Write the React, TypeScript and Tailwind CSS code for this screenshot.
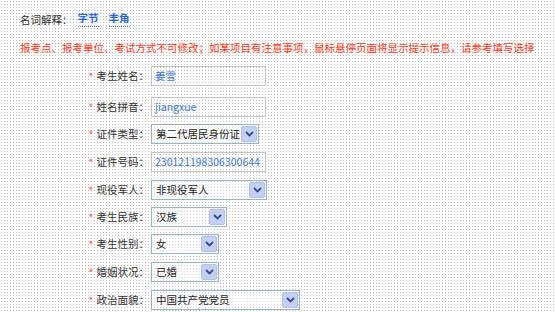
import React from 'react'

const font = { fontFamily: '"Noto Sans CJK SC", "Noto Sans", sans-serif' }

function Arrow() {
  return (
    <span className="flex h-[16px] w-[16px] items-center justify-center rounded-[2px] bg-[#c3cff5] border border-[#b3c0ee]">
      <svg width="9" height="6" viewBox="0 0 9 6">
        <path d="M1 1 L4.5 4.5 L8 1" stroke="#3a4a86" strokeWidth="1.8" fill="none" />
      </svg>
    </span>
  )
}

function Label({ text }: { text: string }) {
  return (
    <div className="flex items-center justify-end pr-[2px] text-[#333]">
      <span className="mr-[3px] text-[11px] leading-none text-[#ff5a5a]">*</span>
      <span>{text}：</span>
    </div>
  )
}

function TextBox({ value, w }: { value: string; w: string }) {
  return (
    <div className={`flex h-[20px] items-center border border-[#c4c4c4] px-[3px] text-[#3c78d8] ${w}`}>
      {value}
    </div>
  )
}

function Select({ value, w }: { value: string; w: string }) {
  return (
    <div className={`flex h-[20px] items-center justify-between border border-[#93b8c4] bg-white/40 pl-[4px] pr-[1px] text-[#222] ${w}`}>
      <span>{value}</span>
      <Arrow />
    </div>
  )
}

const rows: { label: string; kind: 'text' | 'select'; value: string; w: string; gap: string }[] = [
  { label: '考生姓名', kind: 'text', value: '姜雪', w: 'w-[115px]', gap: 'mt-0' },
  { label: '姓名拼音', kind: 'text', value: 'jiangxue', w: 'w-[115px]', gap: 'mt-[11px]' },
  { label: '证件类型', kind: 'select', value: '第二代居民身份证', w: 'w-[108px]', gap: 'mt-[7px]' },
  { label: '证件号码', kind: 'text', value: '230121198306300644', w: 'w-[115px]', gap: 'mt-[8px]' },
  { label: '现役军人', kind: 'select', value: '非现役军人', w: 'w-[116px]', gap: 'mt-[8px]' },
  { label: '考生民族', kind: 'select', value: '汉族', w: 'w-[76px]', gap: 'mt-[7px]' },
  { label: '考生性别', kind: 'select', value: '女', w: 'w-[68px]', gap: 'mt-[7px]' },
  { label: '婚姻状况', kind: 'select', value: '已婚', w: 'w-[68px]', gap: 'mt-[8px]' },
  { label: '政治面貌', kind: 'select', value: '中国共产党党员', w: 'w-[149px]', gap: 'mt-[8px]' },
]

export default function App() {
  return (
    <div
      style={font}
      className="h-[312px] w-[555px] overflow-hidden bg-white bg-[radial-gradient(#bdbdbd_0.75px,transparent_0.85px)] bg-[length:3px_3px] text-[10.5px] leading-none"
    >
      <div className="flex items-center pl-[20px] pt-[13px] text-[#333]">
        <span>名词解释：</span>
        <span className="ml-[5px] border-b border-dotted border-[#3c78d8] pb-[2px] font-bold text-[#2a6ad8]">字节</span>
        <span className="ml-[10px] border-b border-dotted border-[#3c78d8] pb-[2px] font-bold text-[#2a6ad8]">丰角</span>
      </div>
      <div className="mt-[16px] pl-[20px] text-[#ff3a1a]">
        报考点、报考单位、考试方式不可修改；如某项目有注意事项，鼠标悬停页面将显示提示信息，请参考填写选择
      </div>
      <div className="mt-[13px] flex flex-col">
        {rows.map((r) => (
          <div key={r.label} className={`grid grid-cols-[151px_1fr] ${r.gap}`}>
            <Label text={r.label} />
            <div>
              {r.kind === 'text' ? <TextBox value={r.value} w={r.w} /> : <Select value={r.value} w={r.w} />}
            </div>
          </div>
        ))}
      </div>
    </div>
  )
}
